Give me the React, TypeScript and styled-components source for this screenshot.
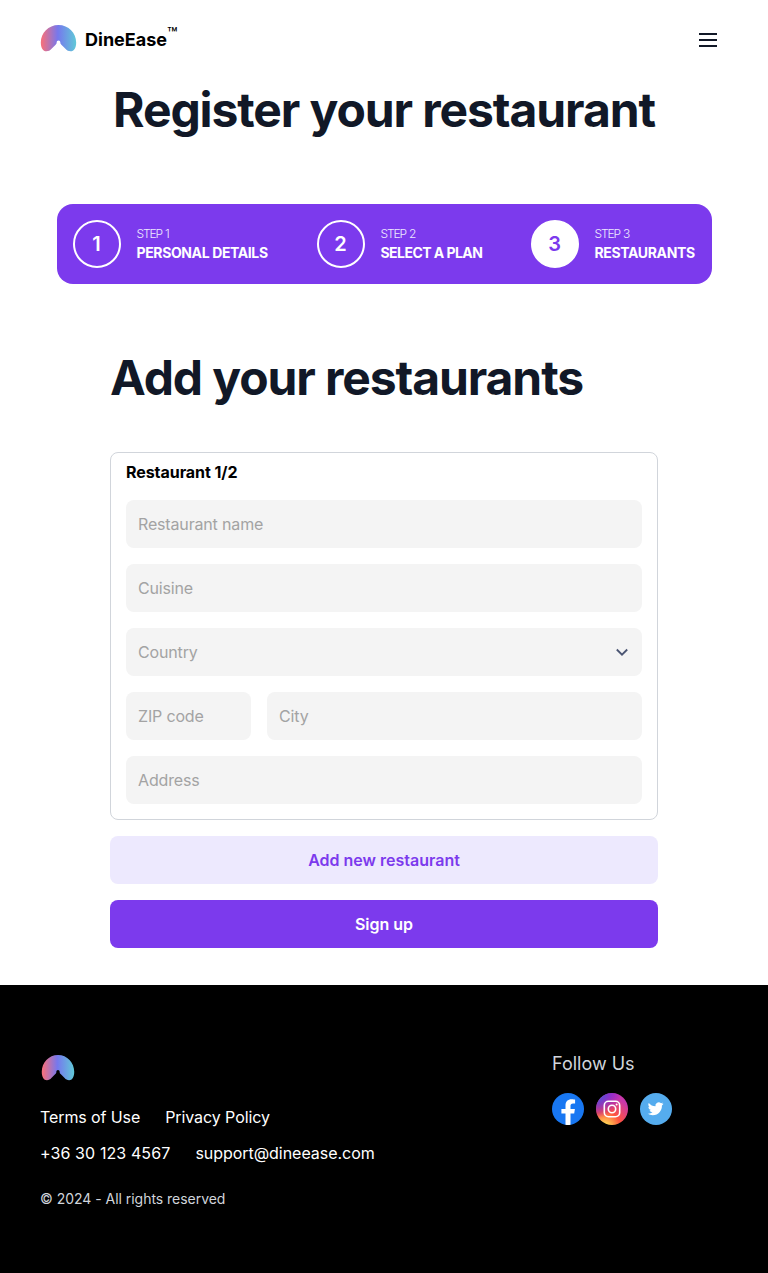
import React from "react";
import styled, { createGlobalStyle } from "styled-components";

const GlobalStyle = createGlobalStyle`
  *, *::before, *::after { box-sizing: border-box; }
  body { margin: 0; background: #fff; color: #000; font-family: Inter, "Liberation Sans", sans-serif; }
  h1, h2, h3, p { margin: 0; }
  input, button { font: inherit; }
`;

const Page = styled.div`
  display: flex;
  flex-direction: column;
  min-height: 1273px;
`;

const Header = styled.header`
  height: 80px;
  padding: 0 48px 0 40px;
  display: flex;
  align-items: center;
  justify-content: space-between;
`;

const Brand = styled.a`
  display: flex;
  align-items: center;
  gap: 8px;
  svg { margin-bottom: 4px; }
`;

const BrandName = styled.span`
  display: flex;
  font-size: 18px;
  line-height: 28px;
  font-weight: 700;
  letter-spacing: 0;
`;

const Trademark = styled.sup`
  font-size: 17px;
  line-height: 17px;
  font-weight: 500;
  letter-spacing: 0;
  margin: 0;
`;

const MenuButton = styled.button`
  width: 24px;
  height: 24px;
  padding: 0;
  border: 0;
  background: none;
  display: flex;
`;

const Title = styled.h1`
  font-size: 48px;
  line-height: 60px;
  font-weight: 700;
  letter-spacing: -1.1px;
  color: #111827;
  text-align: center;
`;

const Steps = styled.ol`
  list-style: none;
  width: 655px;
  height: 80px;
  margin: 64px auto 0;
  padding: 16px;
  border-radius: 16px;
  background: #7c3aed;
  display: flex;
  justify-content: space-between;
  color: #fff;
`;

const Step = styled.li<{ $width: number }>`
  display: flex;
  align-items: center;
  gap: 16px;
  width: ${(p) => p.$width}px;
`;

const StepNumber = styled.span<{ $active?: boolean }>`
  flex: none;
  width: 48px;
  height: 48px;
  border: 2px solid #fff;
  border-radius: 50%;
  display: flex;
  align-items: center;
  justify-content: center;
  font-size: 20px;
  font-weight: 600;
  background: ${(p) => (p.$active ? "#fff" : "transparent")};
  color: ${(p) => (p.$active ? "#7c3aed" : "#fff")};
`;

const StepText = styled.div`
  display: flex;
  flex-direction: column;
  white-space: nowrap;
`;

const StepLabel = styled.span`
  font-size: 12px;
  line-height: 18px;
  font-weight: 300;
  letter-spacing: -1.1px;
  word-spacing: 0.6px;
  color: #ede9fe;
`;

const StepName = styled.span<{ $spacing: number }>`
  font-size: 14px;
  line-height: 19px;
  margin-bottom: 2px;
  font-weight: 700;
  letter-spacing: ${(p) => p.$spacing}px;
`;

const Main = styled.main`
  width: 548px;
  margin: 64px auto 0;
  display: flex;
  flex-direction: column;
`;

const SectionTitle = styled(Title).attrs({ as: "h2" })`
  text-align: left;
`;

const Card = styled.section`
  margin-top: 44px;
  height: 368px;
  padding: 7px 15px 15px;
  border: 1px solid #d1d5db;
  border-radius: 8px;
  display: flex;
  flex-direction: column;
`;

const CardTitle = styled.h3`
  font-size: 16px;
  line-height: 24px;
  font-weight: 700;
  letter-spacing: -0.06px;
  margin-bottom: 16px;
`;

const Fields = styled.div`
  display: flex;
  flex-direction: column;
  gap: 16px;
`;

const FieldRow = styled.div`
  display: grid;
  grid-template-columns: 125px 1fr;
  gap: 16px;
`;

const Field = styled.input`
  width: 100%;
  min-width: 0;
  height: 48px;
  padding: 0 12px;
  border: 0;
  border-radius: 8px;
  background: #f4f4f4;
  font-size: 16px;
  &::placeholder { color: #a3a3a3; opacity: 1; font-weight: 400; letter-spacing: -0.16px; }
`;

const Select = styled.div`
  height: 48px;
  padding: 0 12px;
  border-radius: 8px;
  background: #f4f4f4;
  display: flex;
  align-items: center;
  justify-content: space-between;
  color: #a3a3a3;
  font-size: 16px;
  letter-spacing: -0.16px;
`;

const Button = styled.button<{ $primary?: boolean }>`
  height: 48px;
  margin-top: 16px;
  border: 0;
  border-radius: 8px;
  font-size: 16px;
  font-weight: 600;
  background: ${(p) => (p.$primary ? "#7c3aed" : "#ede9fe")};
  color: ${(p) => (p.$primary ? "#fff" : "#7c3aed")};
`;

const Footer = styled.footer`
  margin-top: 37px;
  height: 288px;
  padding: 64px 96px 0 40px;
  background: #000;
  color: #fff;
  display: flex;
  justify-content: space-between;
`;

const FooterInfo = styled.div`
  display: flex;
  flex-direction: column;
  padding-top: 5px;
  > svg { margin-left: 1px; }
`;

const FooterLinks = styled.div<{ $top: number }>`
  display: flex;
  gap: 25px;
  margin-top: ${(p) => p.$top}px;
  font-size: 16px;
  line-height: 24px;
  font-weight: 400;
`;

const FooterLink = styled.a<{ $spacing: number }>`
  letter-spacing: ${(p) => p.$spacing}px;
`;

const Copyright = styled.p`
  margin-top: 24px;
  font-size: 14px;
  line-height: 20px;
  letter-spacing: -0.03px;
  color: #d1d5db;
`;

const Social = styled.div`
  width: 120px;
`;

const SocialTitle = styled.h3`
  font-size: 18px;
  line-height: 28px;
  font-weight: 400;
  color: #d1d5db;
  margin: 1px 0 15px;
`;

const SocialIcons = styled.div`
  display: flex;
  gap: 12px;
  svg { display: block; }
`;

function Logo({ id, width, height }: { id: string; width: number; height: number }) {
  return (
    <svg width={width} height={height} viewBox="0 0 36 28" preserveAspectRatio="none">
      <defs>
        <linearGradient id={id} x1="0" x2="1" y1="0" y2="0">
          <stop offset="0.04" stopColor="#f17080" />
          <stop offset="0.48" stopColor="#7678ed" />
          <stop offset="1" stopColor="#60c9d8" />
        </linearGradient>
      </defs>
      <path
        fill={`url(#${id})`}
        d="M18 1C8.2 1 .8 9 .8 18.5C.8 24 3 27.3 6.2 27.3C8.4 27.3 9.7 26.3 11 25L15.2 20.8C16.2 19.8 16.2 19.5 16.2 18.6C16.2 17.4 17 16.6 18 16.6S19.8 17.4 19.8 18.6C19.8 19.5 19.8 19.8 20.8 20.8L25 25C26.3 26.3 27.6 27.3 29.8 27.3C33 27.3 35.2 24 35.2 18.5C35.2 9 27.8 1 18 1Z"
      />
    </svg>
  );
}

function FacebookIcon() {
  return (
    <svg width="32" height="32" viewBox="0 0 32 32">
      <circle cx="16" cy="16" r="16" fill="#1877f2" />
      <path fill="#fff" d="M22.2 20.6l.7-4.6h-4.4v-3c0-1.3.6-2.5 2.6-2.5h2V6.600s-1.800-.3-3.600-.3c-3.600 0-6 2.200-6 6.200V16H9.400v4.600h4.100v11.200a16 16 0 0 0 5 0V20.600z" />
    </svg>
  );
}

function InstagramIcon() {
  return (
    <svg width="32" height="32" viewBox="0 0 32 32">
      <defs>
        <radialGradient id="ig-warm" cx="0.27" cy="1.08" r="1">
          <stop offset="0" stopColor="#fd5" />
          <stop offset="0.1" stopColor="#fd5" />
          <stop offset="0.5" stopColor="#ff543e" />
          <stop offset="1" stopColor="#c837ab" />
        </radialGradient>
        <radialGradient id="ig-cool" cx="0" cy="0" r="0.78">
          <stop offset="0" stopColor="#3771c8" />
          <stop offset="0.25" stopColor="#5b50d0" />
          <stop offset="1" stopColor="#6600ff" stopOpacity="0" />
        </radialGradient>
      </defs>
      <circle cx="16" cy="16" r="16" fill="url(#ig-warm)" />
      <circle cx="16" cy="16" r="16" fill="url(#ig-cool)" />
      <g fill="none" stroke="#fff" strokeWidth="1.6">
        <rect x="8.300" y="8.300" width="15.400" height="15.400" rx="4.200" />
        <circle cx="16" cy="16" r="3.700" />
      </g>
      <circle cx="20.600" cy="11.400" r="1" fill="#fff" />
    </svg>
  );
}

function TwitterIcon() {
  return (
    <svg width="32" height="32" viewBox="0 0 32 32">
      <circle cx="16" cy="16" r="16" fill="#55acee" />
      <path
        fill="#fff"
        transform="translate(7.700 7.800) scale(.66)"
        d="M23.950 4.570a10 10 0 0 1-2.820.775 4.960 4.960 0 0 0 2.160-2.720c-.95.555-2.010.96-3.130 1.180a4.920 4.920 0 0 0-8.380 4.480C7.690 8.090 4.070 6.130 1.640 3.160a4.820 4.820 0 0 0-.67 2.470c0 1.710.87 3.210 2.190 4.100a4.900 4.900 0 0 1-2.230-.62v.06a4.920 4.920 0 0 0 3.950 4.830 5 5 0 0 1-2.210.08 4.940 4.940 0 0 0 4.600 3.420A9.870 9.870 0 0 1 0 19.540a13.990 13.990 0 0 0 7.560 2.210c9.050 0 14-7.500 14-13.990 0-.21 0-.42-.02-.63a9.940 9.940 0 0 0 2.410-2.560z"
      />
    </svg>
  );
}

const steps = [
  { n: 1, name: "PERSONAL DETAILS", width: 195, spacing: -0.38 },
  { n: 2, name: "SELECT A PLAN", width: 165, spacing: -0.55 },
  { n: 3, name: "RESTAURANTS", width: 165, spacing: -0.36 },
];

export default function App() {
  return (
    <Page>
      <GlobalStyle />
      <Header>
        <Brand>
          <Logo id="logo-header" width={37} height={28} />
          <BrandName>
            DineEase<Trademark>™</Trademark>
          </BrandName>
        </Brand>
        <MenuButton aria-label="Menu">
          <svg width="24" height="24" viewBox="0 0 24 24" fill="none" stroke="#111827" strokeWidth="2">
            <path d="M3 6h18M3 12h18M3 18h18" />
          </svg>
        </MenuButton>
      </Header>
      <Title>Register your restaurant</Title>
      <Steps>
        {steps.map((s) => (
          <Step key={s.n} $width={s.width}>
            <StepNumber $active={s.n === 3}>{s.n}</StepNumber>
            <StepText>
              <StepLabel>STEP {s.n}</StepLabel>
              <StepName $spacing={s.spacing}>{s.name}</StepName>
            </StepText>
          </Step>
        ))}
      </Steps>
      <Main>
        <SectionTitle>Add your restaurants</SectionTitle>
        <Card>
          <CardTitle>Restaurant 1/2</CardTitle>
          <Fields>
            <Field placeholder="Restaurant name" />
            <Field placeholder="Cuisine" />
            <Select>
              Country
              <svg width="16" height="16" viewBox="0 0 16 16" fill="none" stroke="#4b5573" strokeWidth="1.800">
                <path d="M2.800 5.500L8 10.700l5.200-5.200" />
              </svg>
            </Select>
            <FieldRow>
              <Field placeholder="ZIP code" />
              <Field placeholder="City" />
            </FieldRow>
            <Field placeholder="Address" />
          </Fields>
        </Card>
        <Button>Add new restaurant</Button>
        <Button $primary>Sign up</Button>
      </Main>
      <Footer>
        <FooterInfo>
          <Logo id="logo-footer" width={34} height={27} />
          <FooterLinks $top={24}>
            <FooterLink $spacing={-0.1}>Terms of Use</FooterLink>
            <FooterLink $spacing={-0.08}>Privacy Policy</FooterLink>
          </FooterLinks>
          <FooterLinks $top={12}>
            <FooterLink $spacing={0.1}>+36 30 123 4567</FooterLink>
            <FooterLink $spacing={-0.04}>support@dineease.com</FooterLink>
          </FooterLinks>
          <Copyright>© 2024 - All rights reserved</Copyright>
        </FooterInfo>
        <Social>
          <SocialTitle>Follow Us</SocialTitle>
          <SocialIcons>
            <FacebookIcon />
            <InstagramIcon />
            <TwitterIcon />
          </SocialIcons>
        </Social>
      </Footer>
    </Page>
  );
}
